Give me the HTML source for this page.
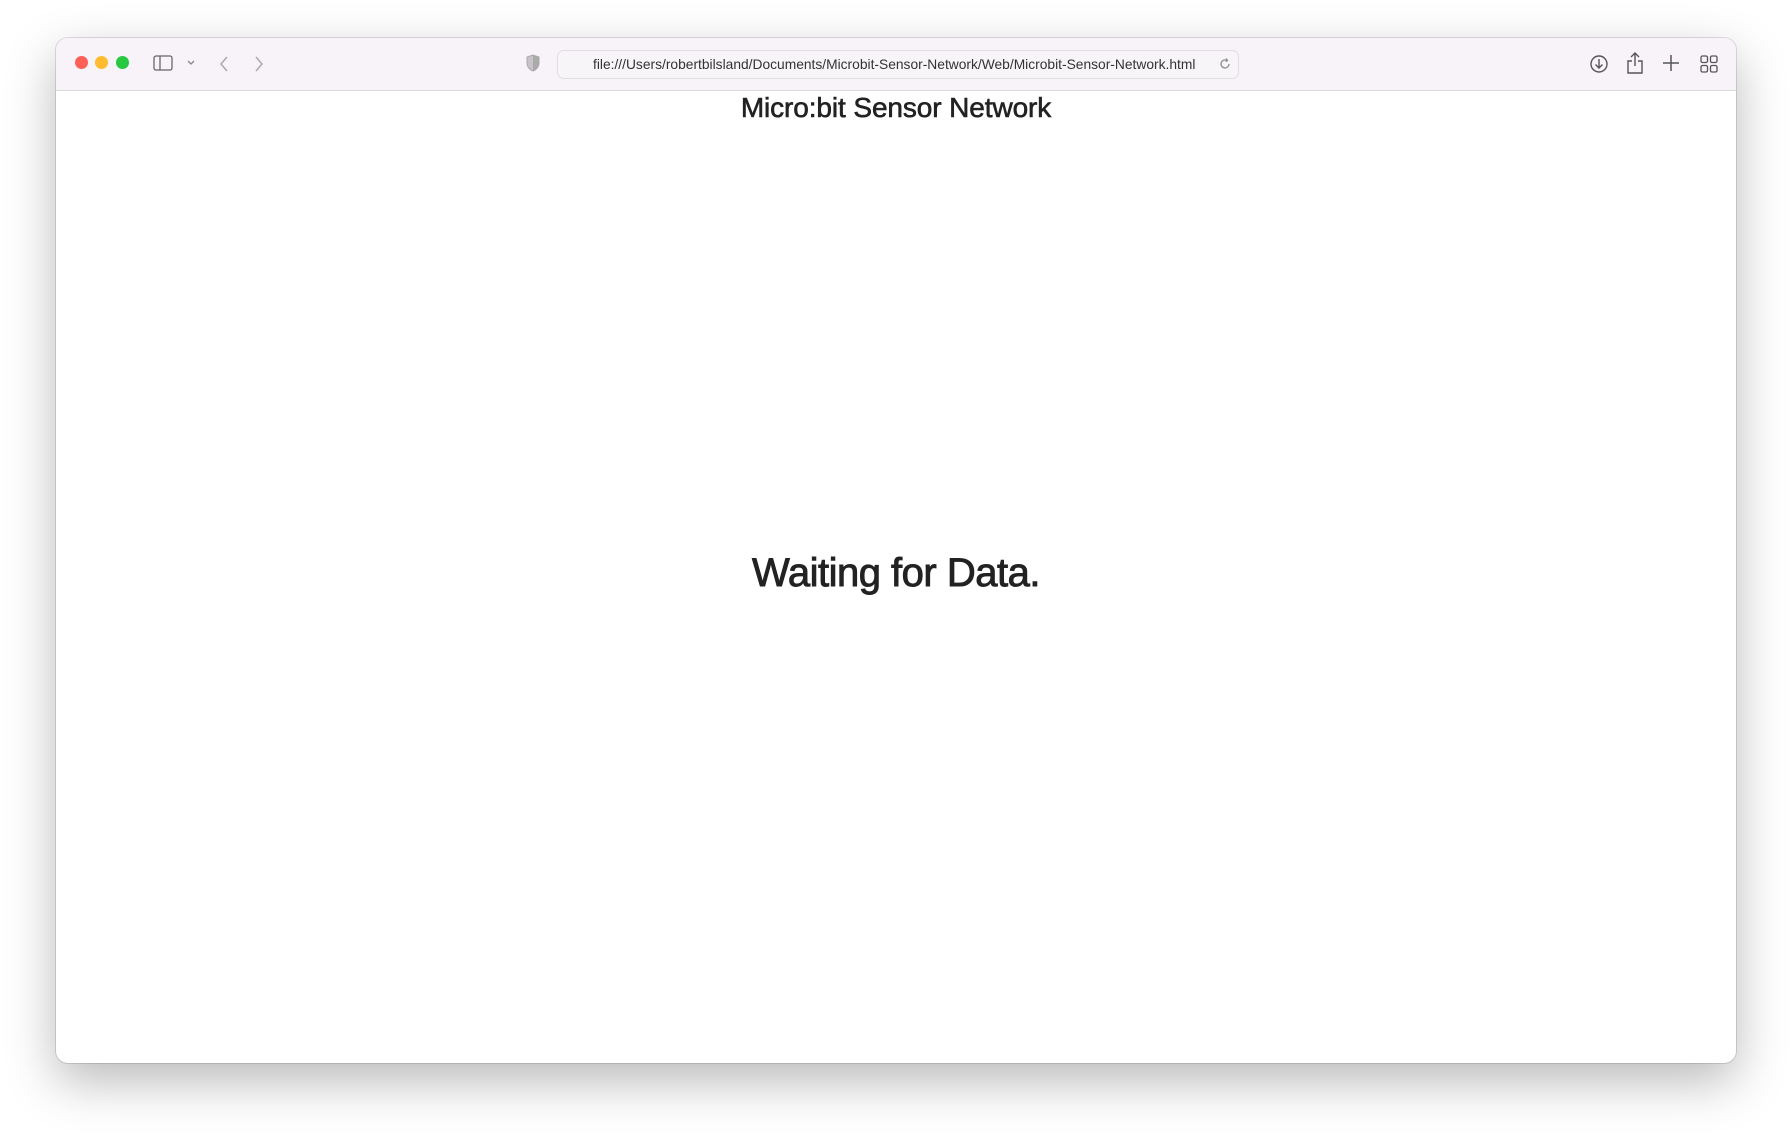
<!DOCTYPE html>
<html><head><style>
html,body{margin:0;padding:0;width:1792px;height:1137px;background:#fff;overflow:hidden;font-family:"Liberation Sans",Arial,sans-serif;}
.win{position:absolute;left:56px;top:38px;width:1680px;height:1025px;border-radius:12px;background:#fff;box-shadow:0 18px 50px rgba(0,0,0,.28),0 0 0 1px rgba(0,0,0,.12);overflow:hidden;}
.bar{position:absolute;left:0;top:0;right:0;height:52px;background:#f7f3f9;border-bottom:1px solid #dcd8de;}
.dot{position:absolute;top:18px;width:13px;height:13px;border-radius:50%;}
.url{position:absolute;left:501px;top:12px;width:680px;height:27px;border:1px solid #e0dce2;border-radius:7px;background:#f8f5f9;}
.url span{position:absolute;left:35px;top:6px;font-size:13.8px;color:#333;white-space:nowrap;}
svg{position:absolute;}
h1{position:absolute;left:0;right:0;top:54px;margin:0;text-align:center;font-size:28px;font-weight:normal;color:#222;letter-spacing:-0.1px;-webkit-text-stroke:0.6px #222;}
h2{position:absolute;left:0;right:0;top:513px;margin:0;text-align:center;font-size:40px;font-weight:normal;color:#222;letter-spacing:-0.5px;-webkit-text-stroke:0.9px #222;}
</style></head><body>
<div class="win">
<div class="bar">
<div class="dot" style="left:19px;background:#fe5f57"></div>
<div class="dot" style="left:39px;background:#febc2e"></div>
<div class="dot" style="left:60px;background:#28c840"></div>
<svg style="left:97px;top:17px" width="20" height="16" viewBox="0 0 20 16"><rect x="1" y="1" width="18" height="14" rx="2" fill="none" stroke="#666" stroke-width="1.3"/><line x1="7" y1="1" x2="7" y2="15" stroke="#666" stroke-width="1.3"/></svg>
<svg style="left:130px;top:21px" width="10" height="8" viewBox="0 0 10 8"><path d="M2 2l3 3 3-3" fill="none" stroke="#888" stroke-width="1.3"/></svg>
<svg style="left:162px;top:17px" width="12" height="18" viewBox="0 0 12 18"><path d="M9 2L3 9l6 7" fill="none" stroke="#aaa" stroke-width="1.5"/></svg>
<svg style="left:197px;top:17px" width="12" height="18" viewBox="0 0 12 18"><path d="M3 2l6 7-6 7" fill="none" stroke="#aaa" stroke-width="1.5"/></svg>
<svg style="left:469px;top:16px" width="16" height="19" viewBox="0 0 16 19"><path d="M8 1L2 3v6c0 4 3 7 6 8 3-1 6-4 6-8V3z" fill="#c7c3c9" stroke="#aaa" stroke-width="1"/><path d="M8 1v16c3-1 6-4 6-8V3z" fill="#aaa"/></svg>
<div class="url"><span>file:///Users/robertbilsland/Documents/Microbit-Sensor-Network/Web/Microbit-Sensor-Network.html</span>
<svg style="left:660px;top:6px" width="14" height="14" viewBox="0 0 14 14"><path d="M11 7a4 4 0 1 1-2-3.5" fill="none" stroke="#888" stroke-width="1.2"/><path d="M8 1.5l1.5 2-2 1" fill="none" stroke="#888" stroke-width="1.2"/></svg></div>
<svg style="left:1533px;top:16px" width="20" height="20" viewBox="0 0 20 20"><circle cx="10" cy="10" r="8" fill="none" stroke="#555" stroke-width="1.4"/><path d="M10 5v9M6.5 10.5L10 14l3.5-3.5" fill="none" stroke="#555" stroke-width="1.4"/></svg>
<svg style="left:1570px;top:13px" width="18" height="24" viewBox="0 0 18 24"><path d="M9 2v13M5 6l4-4 4 4M6 10H2v12h14V10h-4" fill="none" stroke="#555" stroke-width="1.4"/></svg>
<svg style="left:1606px;top:16px" width="18" height="18" viewBox="0 0 18 18"><path d="M9 1v16M1 9h16" stroke="#555" stroke-width="1.5"/></svg>
<svg style="left:1644px;top:17px" width="18" height="18" viewBox="0 0 18 18"><rect x="1" y="1" width="6.5" height="6.5" rx="1.5" fill="none" stroke="#555" stroke-width="1.3"/><rect x="10.5" y="1" width="6.5" height="6.5" rx="1.5" fill="none" stroke="#555" stroke-width="1.3"/><rect x="1" y="10.5" width="6.5" height="6.5" rx="1.5" fill="none" stroke="#555" stroke-width="1.3"/><rect x="10.5" y="10.5" width="6.5" height="6.5" rx="1.5" fill="none" stroke="#555" stroke-width="1.3"/></svg>
</div>
<h1>Micro:bit Sensor Network</h1>
<h2>Waiting for Data.</h2>
</div>
</body></html>
